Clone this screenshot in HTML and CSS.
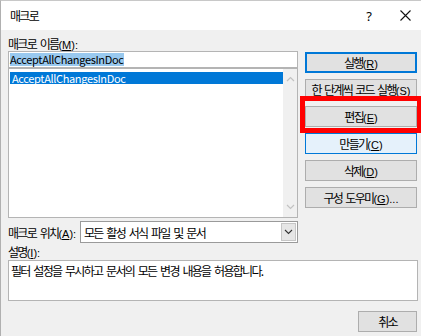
FILE: index.html
```html
<!DOCTYPE html>
<html lang="ko">
<head>
    <meta charset="UTF-8">
    <title>매크로</title>
    <link rel="stylesheet" href="styles.css">
</head>
<body>
    <div class="dialog">
        <div class="titlebar">
            <span class="title">매크로</span>
            <span class="tb-btn help">?</span>
            <span class="tb-btn close">
                <svg width="11" height="11" viewBox="0 0 11 11"><path d="M0.5 0.5 L10.5 10.5 M10.5 0.5 L0.5 10.5" stroke="#111" stroke-width="1.1" fill="none"/></svg>
            </span>
        </div>

        <div class="content">
            <div class="top">
                <!-- macro name + list -->
                <div class="left">
                    <div class="label">매크로 이름<span class="key">(<u>M</u>):</span></div>
                    <div class="name-input latin"><span class="sel">AcceptAllChangesInDoc</span></div>
                    <div class="listbox">
                        <div class="items">
                            <div class="item selected latin">AcceptAllChangesInDoc</div>
                        </div>
                        <div class="scrollbar">
                            <svg width="9" height="6" viewBox="0 0 9 6"><path d="M1 5 L4.5 1.5 L8 5" stroke="#c2c2c2" stroke-width="1.2" fill="none"/></svg>
                            <svg width="9" height="6" viewBox="0 0 9 6"><path d="M1 1 L4.5 4.5 L8 1" stroke="#c2c2c2" stroke-width="1.2" fill="none"/></svg>
                        </div>
                    </div>
                </div>

                <!-- action buttons -->
                <div class="buttons">
                    <button class="btn default">실행<span class="key">(<u>R</u>)</span></button>
                    <button class="btn">한 단계씩 코드 실행<span class="key">(<u>S</u>)</span></button>
                    <button class="btn">편집<span class="key">(<u>E</u>)</span></button>
                    <button class="btn hover">만들기<span class="key">(<u>C</u>)</span></button>
                    <button class="btn">삭제<span class="key">(<u>D</u>)</span></button>
                    <button class="btn">구성 도우미<span class="key">(<u>G</u>)...</span></button>
                </div>
            </div>

            <div class="location-row">
                <span class="loc-label">매크로 위치<span class="key">(<u>A</u>):</span></span>
                <div class="select">
                    <span class="select-text">모든 활성 서식 파일 및 문서</span>
                    <span class="select-arrow">
                        <svg width="9" height="6" viewBox="0 0 9 6"><path d="M1 1 L4.5 4.5 L8 1" stroke="#333" stroke-width="1.1" fill="none"/></svg>
                    </span>
                </div>
            </div>

            <div class="label desc-label">설명<span class="key">(<u>I</u>):</span></div>
            <div class="desc">필터 설정을 무시하고 문서의 모든 변경 내용을 허용합니다.</div>

            <div class="footer">
                <button class="btn cancel">취소</button>
            </div>
        </div>

        <div class="highlight"></div>
    </div>
</body>
</html>
```

FILE: styles.css
```css
body {
    margin: 0;
    background: #f0f0f0;
    font-family: "Noto Sans CJK KR", "Noto Sans", sans-serif;
    font-size: 12px;
    letter-spacing: -1.7px;
    word-spacing: 2px;
    color: #000;
}
u {
    text-decoration-thickness: 1px;
    text-underline-offset: 1px;
}
.key {
    font-family: "Liberation Sans", sans-serif;
    font-size: 11px;
    letter-spacing: 0;
    word-spacing: 0;
}
.dialog {
    position: relative;
    width: 421px;
    height: 336px;
    box-sizing: border-box;
    border-top: 1px solid #c8c8c8;
    border-left: 1px solid #b0b0b0;
    background: #f0f0f0;
    overflow: hidden;
}
.titlebar {
    height: 29px;
    background: #fff;
    display: flex;
    align-items: center;
    padding-left: 9px;
}
.title {
    flex: 1;
}
.tb-btn {
    display: flex;
    justify-content: center;
    font-family: "Noto Sans", sans-serif;
    font-size: 13px;
    letter-spacing: 0;
}
.tb-btn.help {
    width: 40px;
}
.tb-btn.close {
    width: 32px;
}
.content {
    padding: 6px 4px 0 7px;
}
.top {
    display: flex;
    gap: 7px;
}
.left {
    width: 290px;
}
.label {
    height: 15px;
    line-height: 15px;
}
.latin {
    font-family: "Noto Sans CJK KR", sans-serif;
    font-size: 11px;
    letter-spacing: -0.35px;
    word-spacing: 0;
}
.name-input {
    height: 17px;
    box-sizing: border-box;
    background: #fff;
    border: 1px solid #b4b4b4;
    padding: 1px 1px;
    line-height: 13px;
}
.sel {
    background: #99c9ef;
    display: inline-block;
    padding-right: 1px;
}
.listbox {
    height: 150px;
    box-sizing: border-box;
    background: #fff;
    border: 1px solid #b4b4b4;
    display: flex;
}
.items {
    flex: 1;
    padding: 3px 0 0 1px;
}
.item {
    height: 12px;
    line-height: 12px;
    padding-left: 2px;
}
.item.selected {
    background: #0078d7;
    color: #fff;
}
.scrollbar {
    width: 14px;
    background: #f0f0f0;
    display: flex;
    flex-direction: column;
    justify-content: space-between;
    align-items: center;
    padding: 7px 0 7px;
}
.buttons {
    width: 112px;
    padding-top: 16px;
    display: flex;
    flex-direction: column;
    gap: 6px;
}
.btn {
    height: 21px;
    box-sizing: border-box;
    background: #e1e1e1;
    border: 1px solid #adadad;
    font-family: inherit;
    font-size: 12px;
    letter-spacing: -1.7px;
    word-spacing: 1.5px;
    color: #000;
    padding: 0;
}
.btn.default {
    border: 2px solid #0078d7;
}
.btn.hover {
    background: #e5f1fb;
    border-color: #0078d7;
}
.location-row {
    display: flex;
    align-items: center;
    height: 22px;
    margin-top: 3px;
}
.loc-label {
    width: 72px;
}
.select {
    width: 218px;
    height: 22px;
    box-sizing: border-box;
    background: #fff;
    border: 1px solid #9a9a9a;
    display: flex;
    align-items: center;
}
.select-text {
    flex: 1;
    padding-left: 3px;
}
.select-arrow {
    width: 15px;
    height: 18px;
    margin-right: 1px;
    background: #e6e6e6;
    border: 1px solid #c6c6c6;
    box-sizing: border-box;
    display: flex;
    align-items: center;
    justify-content: center;
}
.desc-label {
    margin-top: 1px;
}
.desc {
    margin-top: 1px;
    height: 41px;
    width: 410px;
    box-sizing: border-box;
    background: #fff;
    border: 1px solid #b4b4b4;
    padding: 3px 2px;
    line-height: 14px;
}
.footer {
    display: flex;
    justify-content: flex-end;
    margin-top: 10px;
}
.btn.cancel {
    width: 59px;
}
.highlight {
    position: absolute;
    left: 299px;
    top: 95px;
    width: 122px;
    height: 37px;
    box-sizing: border-box;
    border: 5px solid #ff0000;
}
```
